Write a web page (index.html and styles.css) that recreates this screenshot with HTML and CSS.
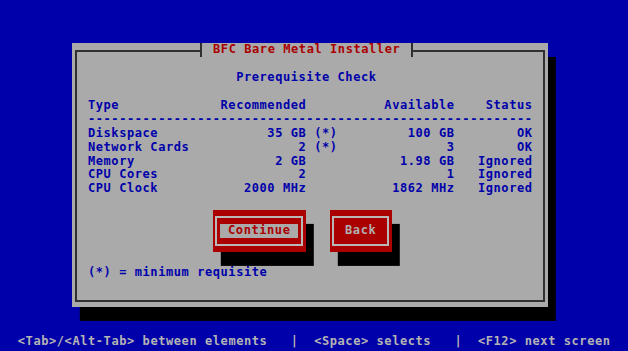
FILE: index.html
```html
<!DOCTYPE html>
<html lang="en">
<head>
    <meta charset="UTF-8">
    <title>BFC Bare Metal Installer</title>
    <link rel="stylesheet" href="styles.css">
</head>
<body>
    <div class="screen">
        <div class="dialog">
            <div class="dialog-title">BFC Bare Metal Installer</div>
            <div class="frame">
                <div class="subtitle">Prerequisite Check</div>

                <div class="checks">
                    <span>Type</span><span class="num">Recommended</span><span class="note-col"></span><span class="num">Available</span><span class="num">Status</span>
                    <span class="rule">---------------------------------------------------------</span>

                    <span>Diskspace</span><span class="num">35 GB</span><span class="note-col">(*)</span><span class="num">100 GB</span><span class="num">OK</span>
                    <span>Network Cards</span><span class="num">2</span><span class="note-col">(*)</span><span class="num">3</span><span class="num">OK</span>
                    <span>Memory</span><span class="num">2 GB</span><span class="note-col"></span><span class="num">1.98 GB</span><span class="num">Ignored</span>
                    <span>CPU Cores</span><span class="num">2</span><span class="note-col"></span><span class="num">1</span><span class="num">Ignored</span>
                    <span>CPU Clock</span><span class="num">2000 MHz</span><span class="note-col"></span><span class="num">1862 MHz</span><span class="num">Ignored</span>
                </div>

                <div class="buttons">
                    <button class="btn btn-continue focused"><span class="btn-inner"><span class="btn-label">Continue</span></span></button>
                    <button class="btn btn-back"><span class="btn-inner"><span class="btn-label">Back</span></span></button>
                </div>

                <div class="note">(*) = minimum requisite</div>
            </div>
        </div>

        <div class="helpline">  &lt;Tab&gt;/&lt;Alt-Tab&gt; between elements   |  &lt;Space&gt; selects   |  &lt;F12&gt; next screen</div>
    </div>
</body>
</html>
```

FILE: styles.css
```css
/* text console: 80 x 25 cells, 7.8px x 13.9px each */
body {
    margin: 0;
    width: 628px;
    height: 351px;
    overflow: hidden;
    background-color: #0000aa;
    font-family: "DejaVu Sans Mono", monospace;
    font-weight: bold;
    font-size: 12px;
    letter-spacing: 0.575px;
    line-height: 13.9px;
}

.screen {
    display: flex;
    flex-direction: column;
    width: 624px;
    height: 347.5px;
    margin: 1.6px 0 0 2.2px;
}

.dialog {
    position: relative;
    display: flex;
    flex-direction: column;
    box-sizing: border-box;
    width: 475.8px;
    height: 264.1px;
    margin: 41.7px 0 0 70.2px;
    padding: 7px 3.2px 5.8px 2.6px;
    background-color: #aaaaaa;
    color: #0000aa;
    box-shadow: 7.8px 13.9px 0 #000;
}

/* title sits over the top line of the frame */
.dialog-title {
    position: absolute;
    top: 0;
    left: 127.4px;
    height: 13.9px;
    padding: 0 10.4px 0 11.3px;
    border-left: 2px solid #303030;
    border-right: 2px solid #303030;
    background-color: #aaaaaa;
    color: #aa0000;
    white-space: pre;
}

.frame {
    flex: 1;
    padding: 18.8px 0 0 11px;
    border: 2px solid #303030;
}

.subtitle {
    margin-left: 148.2px;
    margin-bottom: 13.9px;
}

.checks {
    display: grid;
    grid-template-columns: 132.6px 85.8px 78px 70.2px 78px;
    white-space: pre;
}

.num {
    text-align: right;
}

.note-col {
    padding-left: 7.8px;
}

.rule {
    grid-column: 1 / -1;
    overflow: hidden;
}

.buttons {
    display: flex;
    gap: 23.4px;
    margin: 13.9px 0 13.9px 124.8px;
}

.btn {
    box-sizing: border-box;
    height: 41.7px;
    padding: 6.1px 3.2px 5.8px 2.6px;
    border: none;
    background-color: #aa0000;
    color: #b0b0b0;
    font: inherit;
    letter-spacing: inherit;
    line-height: 13.9px;
    box-shadow: 7.8px 13.9px 0 #000;
}

.btn-continue {
    width: 93.6px;
}

.btn-back {
    width: 62.4px;
}

.btn-inner {
    display: flex;
    align-items: center;
    justify-content: center;
    box-sizing: border-box;
    height: 100%;
    border: 2px solid #b8b8b8;
}

.btn-label {
    padding: 0 7.8px;
    white-space: pre;
}

.focused .btn-label {
    background-color: #aaaaaa;
    color: #aa0000;
}

.note {
    white-space: pre;
}

.helpline {
    margin-top: auto;
    color: #b4b4b4;
    white-space: pre;
}
```
